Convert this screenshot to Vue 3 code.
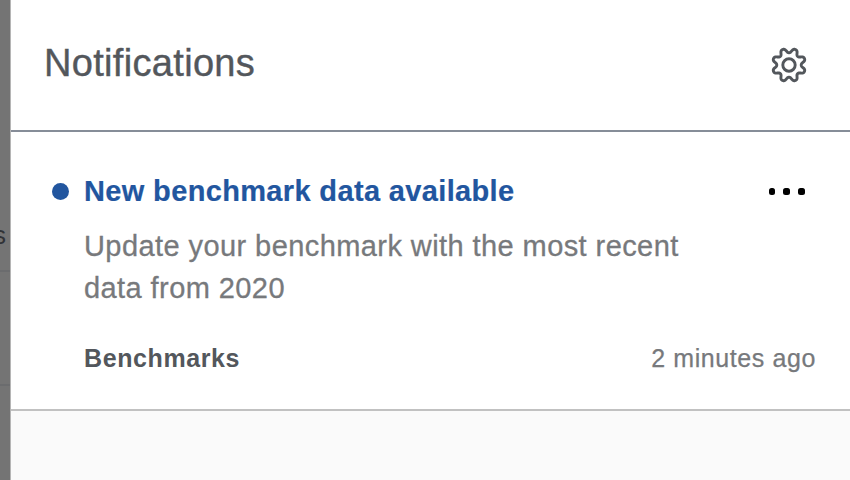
<script setup>
const points = []
for (let i = 0; i < 240; i++) {
  const t = (i / 240) * Math.PI * 2
  const wave = Math.cos(8 * t - Math.PI)
  const r = 14.5 + 2.25 * (Math.tanh(1.2 * wave) / Math.tanh(1.2))
  points.push(`${(20 + r * Math.sin(t)).toFixed(2)},${(20 - r * Math.cos(t)).toFixed(2)}`)
}
const gearPath = `M${points.join('L')}Z`
</script>

<template>
  <div class="screen">
    <div class="backdrop">
      <div class="row first"></div>
      <div class="row second"><span>s</span></div>
      <div class="row third"></div>
    </div>
    <section class="panel">
      <header class="header">
        <h1>Notifications</h1>
        <button class="settings" aria-label="Settings">
          <svg width="40" height="40" viewBox="0 0 40 40" fill="none" stroke="#53575c" stroke-width="2.9" stroke-linejoin="round">
            <path :d="gearPath" />
            <circle cx="20" cy="20" r="6.2" />
          </svg>
        </button>
      </header>
      <article class="item">
        <div class="item-head">
          <span class="unread"></span>
          <h2>New benchmark data available</h2>
          <button class="more" aria-label="More"><i></i><i></i><i></i></button>
        </div>
        <p>Update your benchmark with the most recent<br />data from 2020</p>
        <footer>
          <strong>Benchmarks</strong>
          <time>2 minutes ago</time>
        </footer>
      </article>
    </section>
  </div>
</template>

<style>
body { margin: 0; overflow: hidden; }
</style>

<style scoped>
* { box-sizing: border-box; }
.screen { display: flex; width: 850px; height: 480px; overflow: hidden; background: #fafafa; font-family: "Liberation Sans", Arial, sans-serif; }
.backdrop { flex: none; width: 10px; height: 480px; background: #747474; overflow: hidden; }
.row { border-bottom: 2px solid #6b6c6e; }
.first { height: 200px; border: 0; }
.second { display: flex; justify-content: flex-end; align-items: center; height: 72px; padding-right: 4px; font-size: 26px; color: #303236; }
.second span { line-height: 30px; }
.third { height: 114px; }
.panel { flex: 1; min-width: 0; border-left: 1px solid #b5b5b5; }
.header { display: flex; align-items: center; justify-content: space-between; height: 132px; padding: 0 41px 0 33px; background: #fff; border-bottom: 2px solid #868d98; }
h1 { margin: 0; padding-bottom: 4px; font-size: 38px; line-height: 44px; font-weight: 400; letter-spacing: .32px; color: #53575c; -webkit-text-stroke: .4px #53575c; }
button { padding: 0; border: 0; background: none; }
.settings { width: 40px; height: 40px; }
.settings svg { display: block; }
.item { height: 279px; padding: 39px 34px 0 41px; background: #fff; border-bottom: 2px solid #c1c1c1; }
.item-head { display: flex; align-items: center; height: 40px; }
.unread { width: 17px; height: 17px; margin-right: 15px; border-radius: 50%; background: #22569f; }
h2 { flex: 1; margin: 0; font-size: 29px; line-height: 40px; font-weight: 700; letter-spacing: .35px; color: #22569f; -webkit-text-stroke: .2px #22569f; }
.more { display: flex; gap: 8px; margin-right: 11.3px; padding-top: 1px; }
.more i { width: 6.7px; height: 6.5px; border-radius: 2.5px; background: #000; }
p { margin: 14px 0 0 32px; font-size: 29px; line-height: 42px; letter-spacing: .42px; color: #77797c; white-space: nowrap; -webkit-text-stroke: .3px #77797c; }
footer { display: flex; justify-content: space-between; margin: 34px 0 0 32px; font-size: 25px; line-height: 30px; letter-spacing: .6px; }
strong { color: #53575c; }
time { color: #77797c; -webkit-text-stroke: .25px #77797c; }
</style>
